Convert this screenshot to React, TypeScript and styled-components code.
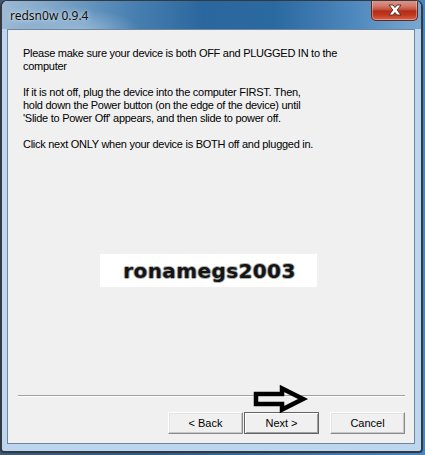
import React from "react";
import styled, { createGlobalStyle } from "styled-components";

const Global = createGlobalStyle`
  html, body { margin: 0; padding: 0; }
  body {
    background: linear-gradient(to right, #3c5a78, #2d5f8f 40%, #4a86bd);
    width: 425px; height: 455px; overflow: hidden;
  }
`;

const Window = styled.div`
  position: relative;
  box-sizing: border-box;
  width: 423px;
  height: 453px;
  border: 2px solid #34393f;
  border-top-width: 1px;
  border-radius: 7px 7px 4px 4px;
  background: #bcd6f0;
  display: flex;
  flex-direction: column;
  overflow: hidden;
`;

const TitleBar = styled.div`
  position: relative;
  height: 28px;
  flex: none;
  margin: 0 -2px;
  padding-left: 10px;
  display: flex;
  align-items: center;
  background:
    radial-gradient(ellipse 60px 22px at 80px 30px, rgba(190, 215, 235, 0.55), rgba(190, 215, 235, 0) 100%),
    linear-gradient(to right, #9dbbd6 0%, #7ea6c9 12%, #4c82b3 30%, #2a679e 48%, #2b69a1 65%, #4a85bb 82%, #7aa8d2 100%);
`;

const Title = styled.span`
  font-family: "Noto Sans", "Open Sans", sans-serif;
  font-size: 12px;
  color: #0c0c0c;
  text-shadow: 0 0 6px rgba(255, 255, 255, 0.8), 0 0 2px rgba(255, 255, 255, 0.6);
  margin-top: 1px;
`;

const CloseButton = styled.div`
  position: absolute;
  top: -1px;
  right: 5px;
  width: 47px;
  height: 21px;
  box-sizing: border-box;
  border: 1px solid #5c2a22;
  border-top: none;
  border-radius: 0 0 5px 5px;
  background: linear-gradient(to bottom, #dd9a8e 0%, #d27a6a 30%, #c2503c 48%, #b42c16 55%, #c03820 75%, #d9654a 100%);
  box-shadow: inset 0 0 0 1px rgba(255, 220, 210, 0.4);
  display: flex;
  align-items: center;
  justify-content: center;
`;

const Frame = styled.div`
  flex: 1;
  display: flex;
  padding: 0 6px 7px 5px;
`;

const Panel = styled.div`
  flex: 1;
  display: flex;
  flex-direction: column;
  border: 1px solid #71869b;
  background: #f0f0f0;
  position: relative;
`;

const Message = styled.div`
  padding: 17px 0 0 15px;
  font-family: "Liberation Sans", Arial, sans-serif;
  font-size: 11px;
  letter-spacing: -0.27px;
  line-height: 13px;
  color: #000;
  white-space: pre;
`;

const Watermark = styled.div`
  margin: 103px 0 0 92px;
  width: 217px;
  height: 33px;
  background: #ffffff;
  display: flex;
  align-items: center;
  justify-content: center;
  font-family: "DejaVu Sans", Verdana, sans-serif;
  font-weight: bold;
  font-size: 20px;
  letter-spacing: 0.4px;
  padding-left: 2px;
  box-sizing: border-box;
  color: #141414;
  text-shadow: 1px 0 #b0b0b0, -1px 0 #b0b0b0, 0 1px #b0b0b0, 0 -1px #b0b0b0;
`;

const Footer = styled.div`
  margin-top: auto;
  position: relative;
  padding-bottom: 9px;
`;

const Separator = styled.div`
  margin: 0 9px 0 10px;
  border-top: 1px solid #a0a0a0;
  border-bottom: 1px solid #ffffff;
`;

const ButtonRow = styled.div`
  display: flex;
  justify-content: flex-end;
  margin: 15px 9px 0 0;
`;

const Button = styled.div<{ $primary?: boolean; $gap?: number }>`
  box-sizing: border-box;
  width: 75px;
  height: 22px;
  margin-left: ${(p) => p.$gap ?? 0}px;
  display: flex;
  align-items: center;
  justify-content: center;
  font-family: "Liberation Sans", Arial, sans-serif;
  font-size: 11px;
  color: #000;
  background: #f0f0f0;
  border: 1px solid;
  border-color: ${(p) => (p.$primary ? "#646464" : "#ffffff #8a8a8a #8a8a8a #ffffff")};
  box-shadow: ${(p) =>
    p.$primary
      ? "inset 1px 1px 0 #ffffff, inset -1px -1px 0 #a0a0a0"
      : "inset -1px -1px 0 #c8c8c8, inset 1px 1px 0 #e3e3e3"};
`;

const Arrow = styled.svg`
  position: absolute;
  left: 242px;
  top: -7px;
  overflow: visible;
`;

const message = `Please make sure your device is both OFF and PLUGGED IN to the
computer

If it is not off, plug the device into the computer FIRST. Then,
hold down the Power button (on the edge of the device) until
'Slide to Power Off' appears, and then slide to power off.

Click next ONLY when your device is BOTH off and plugged in.`;

export default function App() {
  return (
    <>
      <Global />
      <Window>
        <TitleBar>
          <Title>redsn0w 0.9.4</Title>
          <CloseButton>
            <svg width="16" height="12" viewBox="0 0 16 12">
              <path
                d="M2 1 H6 L8 3.5 L10 1 H14 L10.2 6 L14 11 H10 L8 8.5 L6 11 H2 L5.8 6 Z"
                fill="#ffffff"
                stroke="#5a2e28"
                strokeWidth="1"
                strokeLinejoin="round"
              />
            </svg>
          </CloseButton>
        </TitleBar>
        <Frame>
          <Panel>
            <Message>{message}</Message>
            <Watermark>ronamegs2003</Watermark>
            <Footer>
              <Separator />
              <ButtonRow>
                <Button>&lt; Back</Button>
                <Button $primary $gap={1}>Next &gt;</Button>
                <Button $gap={11}>Cancel</Button>
              </ButtonRow>
              <Arrow width="60" height="30" viewBox="0 0 60 30">
                <polygon
                  points="6,6 32,6 32,0.5 53,11 32,21.5 32,16 6,16"
                  fill="none"
                  stroke="#000000"
                  strokeWidth="4.5"
                  strokeLinejoin="miter"
                />
              </Arrow>
            </Footer>
          </Panel>
        </Frame>
      </Window>
    </>
  );
}
